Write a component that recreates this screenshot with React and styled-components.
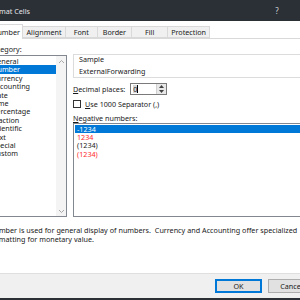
import styled, { createGlobalStyle } from "styled-components";

const GlobalStyle = createGlobalStyle`
  html, body {
    margin: 0;
    padding: 0;
    overflow: hidden;
    background: #ffffff;
  }
  body {
    font-family: "Noto Sans", "Open Sans", sans-serif;
    font-size: 7.2px;
    color: #1a1a1a;
  }
`;

const categorias = [
  "General",
  "Number",
  "Currency",
  "Accounting",
  "Date",
  "Time",
  "Percentage",
  "Fraction",
  "Scientific",
  "Text",
  "Special",
  "Custom",
];

const negativos = [
  { texto: "-1234", vermelho: false, selecionado: true },
  { texto: "1234", vermelho: true },
  { texto: "(1234)", vermelho: false },
  { texto: "(1234)", vermelho: true },
];

const abas = [
  { nome: "Number", largura: 34, ativa: true },
  { nome: "Alignment", largura: 44 },
  { nome: "Font", largura: 32.6 },
  { nome: "Border", largura: 35.7 },
  { nome: "Fill", largura: 36.7 },
  { nome: "Protection", largura: 43.3 },
];

function Chevron({ baixo }) {
  return (
    <svg width="7" height="5" viewBox="0 0 7 5">
      <path
        d={baixo ? "M1 1 L3.5 3.5 L6 1" : "M1 4 L3.5 1.5 L6 4"}
        fill="none"
        stroke="#a8a8a8"
        strokeWidth="1"
      />
    </svg>
  );
}

function SpinSeta({ baixo }) {
  return (
    <svg width="5" height="3" viewBox="0 0 5 3">
      <path d={baixo ? "M0 0 L5 0 L2.5 3 Z" : "M0 3 L5 3 L2.5 0 Z"} fill="#404040" />
    </svg>
  );
}

export default function App() {
  return (
    <>
      <GlobalStyle />
      <Tela>
        <Dialogo>
          <BarraTitulo>
            <Titulo>Format Cells</Titulo>
            <BotaoAjuda>?</BotaoAjuda>
            <BotaoFechar>✕</BotaoFechar>
          </BarraTitulo>

          <Corpo>
            <Abas>
              {abas.map((a) => (
                <Aba key={a.nome} $ativa={a.ativa} $largura={a.largura}>
                  {a.nome}
                </Aba>
              ))}
            </Abas>

            <Painel>
              <Colunas>
                <ColunaEsquerda>
                  <Rotulo>
                    <u>C</u>ategory:
                  </Rotulo>
                  <ListaCategorias>
                    <Itens>
                      {categorias.map((c) => (
                        <ItemCategoria key={c} $selecionado={c === "Number"}>
                          {c}
                        </ItemCategoria>
                      ))}
                    </Itens>
                    <BarraRolagem>
                      <SetaRolagem>
                        <Chevron />
                      </SetaRolagem>
                      <SetaRolagem>
                        <Chevron baixo />
                      </SetaRolagem>
                    </BarraRolagem>
                  </ListaCategorias>
                </ColunaEsquerda>

                <ColunaDireita>
                  <GrupoAmostra>
                    <Legenda>Sample</Legenda>
                    <ValorAmostra>ExternalForwarding</ValorAmostra>
                  </GrupoAmostra>

                  <LinhaDecimal>
                    <Rotulo>
                      <u>D</u>ecimal places:
                    </Rotulo>
                    <Spin>
                      <SpinValor>
                        <Cursor>0</Cursor>
                      </SpinValor>
                      <SpinBotoes>
                        <SpinBotao>
                          <SpinSeta />
                        </SpinBotao>
                        <SpinBotao>
                          <SpinSeta baixo />
                        </SpinBotao>
                      </SpinBotoes>
                    </Spin>
                  </LinhaDecimal>

                  <LinhaCheck>
                    <Caixa />
                    <span>
                      <u>U</u>se 1000 Separator (,)
                    </span>
                  </LinhaCheck>

                  <RotuloNegativo>
                    <u>N</u>egative numbers:
                  </RotuloNegativo>
                  <ListaNegativos>
                    {negativos.map((n, i) => (
                      <ItemNegativo
                        key={i}
                        $vermelho={n.vermelho}
                        $selecionado={n.selecionado}
                      >
                        {n.texto}
                      </ItemNegativo>
                    ))}
                  </ListaNegativos>
                </ColunaDireita>
              </Colunas>

              <Descricao>
                Number is used for general display of numbers.&nbsp; Currency and
                Accounting offer specialized
                <br />
                formatting for monetary value.
              </Descricao>
            </Painel>
          </Corpo>

          <Rodape>
            <Botao $padrao>OK</Botao>
            <Botao>Cancel</Botao>
          </Rodape>
          <BordaInferior />
        </Dialogo>
      </Tela>
    </>
  );
}

const Tela = styled.div`
  width: 300px;
  height: 300px;
  overflow: hidden;
`;

const Dialogo = styled.div`
  width: 348px;
  height: 300px;
  margin-left: -22px;
  display: flex;
  flex-direction: column;
  background: #ffffff;
`;

const BarraTitulo = styled.div`
  height: 21px;
  flex-shrink: 0;
  background: #2b2f36;
  color: #e6e6e6;
  display: flex;
  align-items: center;
`;

const Titulo = styled.div`
  flex: 1;
  font-size: 7.2px;
  margin-left: 10px;
  white-space: nowrap;
`;

const BotaoAjuda = styled.div`
  width: 30px;
  flex-shrink: 0;
  text-align: center;
  font-size: 8px;
  color: #cfd2d6;
`;

const BotaoFechar = styled.div`
  width: 34px;
  flex-shrink: 0;
  text-align: center;
  font-size: 8px;
  color: #cfd2d6;
`;

const Corpo = styled.div`
  flex: 1;
  display: flex;
  flex-direction: column;
  background: #ffffff;
`;

const Abas = styled.div`
  display: flex;
  align-items: flex-end;
  height: 17px;
  padding-left: 11px;
`;

const Aba = styled.div`
  width: ${(p) => p.$largura}px;
  height: ${(p) => (p.$ativa ? 15 : 12)}px;
  flex-shrink: 0;
  box-sizing: border-box;
  display: flex;
  align-items: center;
  justify-content: center;
  background: ${(p) => (p.$ativa ? "#ffffff" : "#f0f0f0")};
  border: 1px solid #d9d9d9;
  border-bottom: ${(p) => (p.$ativa ? "none" : "1px solid #d9d9d9")};
  margin-right: -1px;
  margin-bottom: ${(p) => (p.$ativa ? "-1px" : "0")};
  position: relative;
  z-index: ${(p) => (p.$ativa ? 1 : 0)};
`;

const Painel = styled.div`
  height: 234px;
  border-top: 1px solid #d9d9d9;
  padding: 6px 11px 0;
  box-sizing: border-box;
`;

const Colunas = styled.div`
  display: grid;
  grid-template-columns: 78px 1fr;
  column-gap: 6px;
`;

const ColunaEsquerda = styled.div`
  display: flex;
  flex-direction: column;
`;

const ColunaDireita = styled.div`
  display: flex;
  flex-direction: column;
  padding-top: 9px;
`;

const Rotulo = styled.div`
  line-height: 8px;
  white-space: nowrap;
`;

const ListaCategorias = styled.div`
  margin-top: 2px;
  height: 162px;
  box-sizing: border-box;
  border: 1px solid #828790;
  display: flex;
`;

const Itens = styled.div`
  flex: 1;
  padding-top: 1px;
`;

const ItemCategoria = styled.div`
  height: 8.4px;
  line-height: 8.4px;
  padding-left: 2px;
  background: ${(p) => (p.$selecionado ? "#0078d7" : "transparent")};
  color: ${(p) => (p.$selecionado ? "#ffffff" : "#1a1a1a")};
`;

const BarraRolagem = styled.div`
  width: 10px;
  background: #f4f4f4;
  display: flex;
  flex-direction: column;
  justify-content: space-between;
`;

const SetaRolagem = styled.div`
  height: 10px;
  display: flex;
  align-items: center;
  justify-content: center;
`;

const GrupoAmostra = styled.div`
  height: 24px;
  box-sizing: border-box;
  border: 1px solid #dcdcdc;
  border-right: none;
  padding: 0 0 0 5px;
`;

const Legenda = styled.div`
  line-height: 9px;
`;

const ValorAmostra = styled.div`
  margin-top: 3px;
  line-height: 9px;
`;

const LinhaDecimal = styled.div`
  margin-top: 5px;
  display: flex;
  align-items: center;
  gap: 5px;
`;

const Spin = styled.div`
  width: 37px;
  height: 12px;
  box-sizing: border-box;
  border: 1px solid #7a7a7a;
  display: flex;
`;

const SpinValor = styled.div`
  flex: 1;
  padding-left: 2px;
  display: flex;
  align-items: center;
`;

const Cursor = styled.span`
  line-height: 8px;
  background: #d8d8d8;
  border-right: 1px solid #000;
`;

const SpinBotoes = styled.div`
  width: 9px;
  display: flex;
  flex-direction: column;
  border-left: 1px solid #d0d0d0;
`;

const SpinBotao = styled.div`
  flex: 1;
  background: #e8e8e8;
  display: flex;
  align-items: center;
  justify-content: center;
`;

const LinhaCheck = styled.div`
  margin-top: 5px;
  height: 8px;
  display: flex;
  align-items: center;
  gap: 4px;
`;

const Caixa = styled.div`
  width: 8px;
  height: 8px;
  box-sizing: border-box;
  border: 1px solid #333333;
  background: #ffffff;
`;

const RotuloNegativo = styled.div`
  margin-top: 6px;
  line-height: 8px;
`;

const ListaNegativos = styled.div`
  margin-top: 1px;
  height: 94px;
  box-sizing: border-box;
  border: 1px solid #828790;
  padding: 1px 1px 0;
`;

const ItemNegativo = styled.div`
  height: 8.2px;
  line-height: 8.2px;
  padding-left: 2px;
  background: ${(p) => (p.$selecionado ? "#0078d7" : "transparent")};
  color: ${(p) =>
    p.$selecionado ? "#ffffff" : p.$vermelho ? "#ff2a2a" : "#1a1a1a"};
`;

const Descricao = styled.div`
  margin-top: 9px;
  line-height: 9.3px;
  white-space: nowrap;
  word-spacing: 0.1px;
`;

const Rodape = styled.div`
  height: 25px;
  flex-shrink: 0;
  box-sizing: border-box;
  background: #f0f0f0;
  border-top: 1px solid #dfdfdf;
  display: flex;
  justify-content: flex-end;
  align-items: flex-start;
  gap: 6px;
  padding: 5px 11px 0 0;
`;

const Botao = styled.div`
  width: 47px;
  height: 14px;
  box-sizing: border-box;
  display: flex;
  align-items: center;
  justify-content: center;
  background: #e1e1e1;
  border: ${(p) => (p.$padrao ? "1px solid #0078d7" : "1px solid #adadad")};
  box-shadow: ${(p) => (p.$padrao ? "inset 0 0 0 1px #0078d7" : "none")};
`;

const BordaInferior = styled.div`
  height: 2px;
  background: #2b2f36;
`;
